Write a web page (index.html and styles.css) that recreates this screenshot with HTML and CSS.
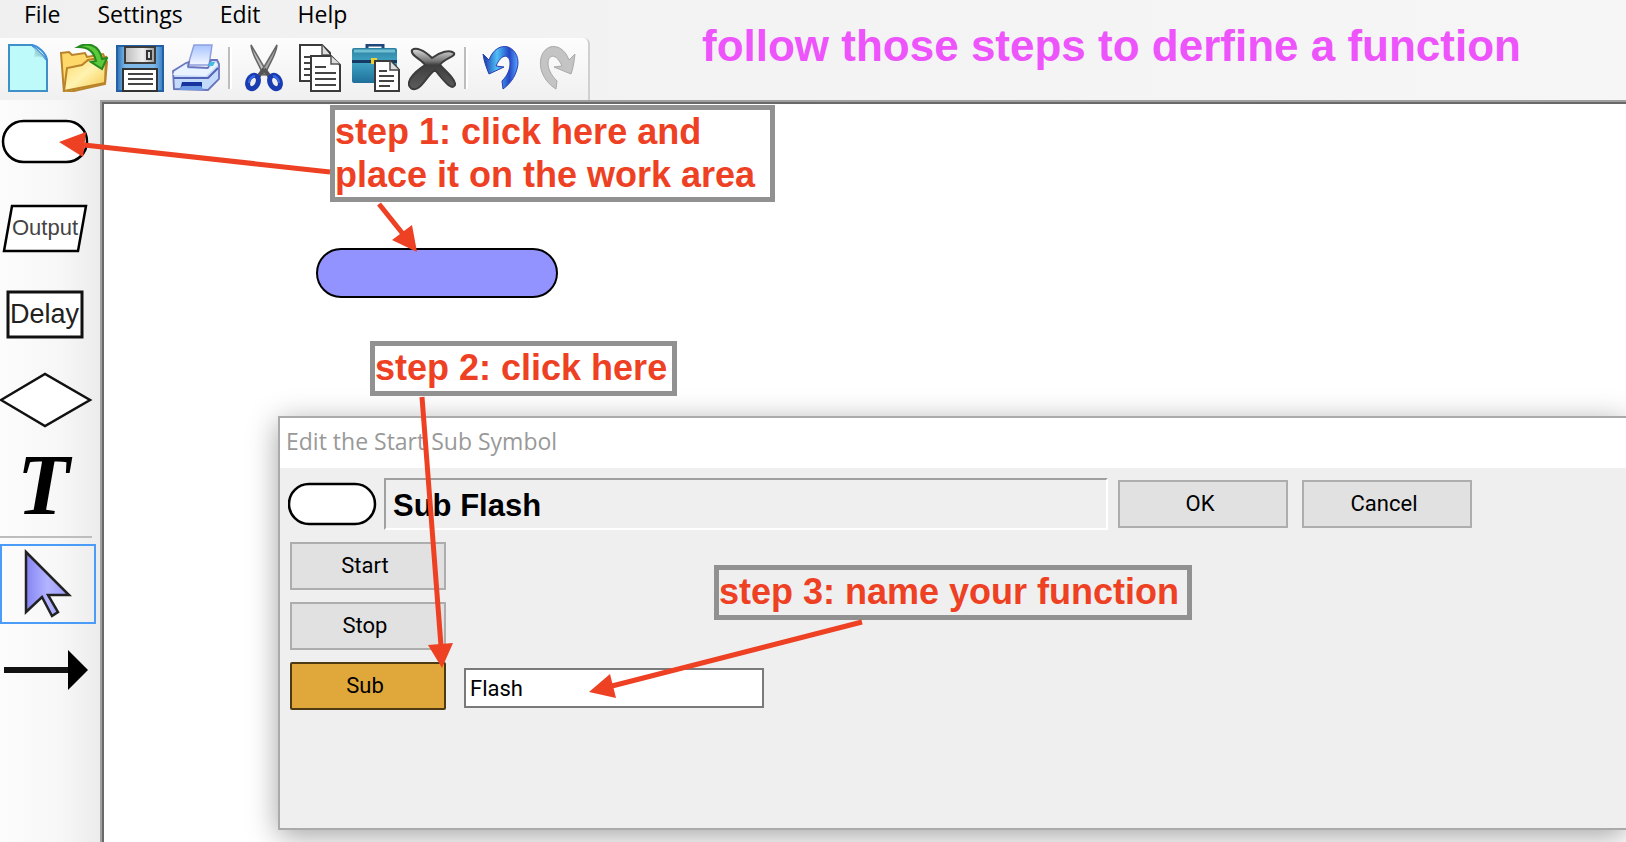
FILE: index.html
```html
<!DOCTYPE html>
<html lang="en">
<head>
<meta charset="utf-8">
<title>Flowchart editor</title>
<link rel="stylesheet" href="styles.css">
</head>
<body>
<div class="app">
  <header class="top">
    <nav class="menu" aria-label="Main menu">
      <button type="button">File</button>
      <button type="button">Settings</button>
      <button type="button">Edit</button>
      <button type="button">Help</button>
    </nav>
    <div class="toolbar" role="toolbar" aria-label="Tools">
      <button type="button" aria-label="New">
        <svg viewBox="0 0 48 48"><defs><linearGradient id="fold" x1="0" y1="1" x2="1" y2="0"><stop offset="0" stop-color="#c3fbfc"/><stop offset=".55" stop-color="#8cc6d0"/><stop offset="1" stop-color="#d5f5fa"/></linearGradient></defs>
          <path d="M5 1h23l15 15v31H5z" fill="#bffafb" stroke="#3f8fc9" stroke-width="2"/><path d="M28 1c4 4 3 8 2 12 5-1 9-1 13 3z" fill="url(#fold)"/><path d="M28 1c6 1 14 8 15 15" fill="none" stroke="#3b8ee0" stroke-width="2"/></svg>
      </button>
      <button type="button" aria-label="Open">
        <svg viewBox="0 0 48 48"><defs><linearGradient id="folder" x1="0" y1="0" x2="1" y2="1"><stop offset="0" stop-color="#ffd764"/><stop offset=".5" stop-color="#fff3b0"/><stop offset="1" stop-color="#f5c545"/></linearGradient></defs>
          <path d="M1 9l8-1 3 3 13-2 2 4 16-3 4 8-2 22-40 9H4z" fill="#ffd86a" stroke="#b9832a" stroke-width="2"/><path d="M4 47l3-23 15-3 6-5 18-3-1 26z" fill="url(#folder)" stroke="#b9832a" stroke-width="2"/><path d="M18 3C27-2 39 0 42 15l5-1-5 11-11-7 5-1C34 7 28 3 18 3z" fill="#5cc83c" stroke="#248a1d" stroke-width="2"/></svg>
      </button>
      <button type="button" aria-label="Save">
        <svg viewBox="0 0 48 48"><defs><linearGradient id="disk"><stop offset="0" stop-color="#2b6fb3"/><stop offset=".18" stop-color="#7db8e8"/><stop offset=".8" stop-color="#7db8e8"/><stop offset="1" stop-color="#3a7fc4"/></linearGradient><linearGradient id="metal"><stop offset="0" stop-color="#bcbcbc"/><stop offset=".6" stop-color="#efefef"/><stop offset="1" stop-color="#9a9a9a"/></linearGradient></defs>
          <path d="M1 2h46v45H1z" fill="url(#disk)" stroke="#235fa5" stroke-width="2"/><path d="M9 3h30v16H9z" fill="url(#metal)" stroke="#3c3c3c" stroke-width="2"/><path d="M31 7h4v8h-4z" fill="#ddd" stroke="#333" stroke-width="2"/><path d="M7 25h34v22H7z" fill="#fff" stroke="#333" stroke-width="2"/><path d="M12 30h25M12 35h25M12 40h25" stroke="#444" stroke-width="2"/></svg>
      </button>
      <button type="button" aria-label="Print">
        <svg viewBox="0 0 48 48"><defs><linearGradient id="paper" x1="0" y1="0" x2="0" y2="1"><stop offset="0" stop-color="#a8c4ff"/><stop offset="1" stop-color="#f4f7ff"/></linearGradient></defs>
          <path d="M22 1h18l-3 20H16z" fill="url(#paper)" stroke="#8f9fdd" stroke-width="1.5"/><path d="M1 27l13-8 3-1-1 5 20 1 3-8 6 0 2 4v15L36 46 2 45z" fill="#c3dafb" stroke="#6a74bb" stroke-width="1.8"/><path d="M2 28l12-8 2 5h20l8-7 2 3-12 11-33-1z" fill="#e9f2ff"/><path d="M2 34h34l10-10" fill="none" stroke="#5564b5" stroke-width="2"/><path d="M10 38h20v8H8z" fill="#17349f"/><path d="M10 42h19l3 4H7z" fill="#6d9be6"/><path d="M38 18l5 0-2 4h-5z" fill="#42bce0"/></svg>
      </button>
      <span class="rule"></span>
      <button type="button" aria-label="Cut">
        <svg viewBox="0 0 48 48"><path d="M11 1l16 27-4 3C19 19 12 12 11 1z" fill="#bdbdbd" stroke="#666" stroke-width="1.5"/><path d="M37 1L21 28l4 3C29 19 36 12 37 1z" fill="#a5a5a5" stroke="#666" stroke-width="1.5"/><path d="M24 25l-6 8M24 25l6 8" stroke="#555" stroke-width="4"/><ellipse cx="13" cy="38" rx="5" ry="7" transform="rotate(25 13 38)" fill="#eee" stroke="#1a3cb0" stroke-width="5"/><ellipse cx="35" cy="38" rx="5" ry="7" transform="rotate(-25 35 38)" fill="#eee" stroke="#1a3cb0" stroke-width="5"/><path d="M9 39c0-4 3-7 6-7M39 39c0-4-3-7-6-7" fill="none" stroke="#3569e5" stroke-width="2"/></svg>
      </button>
      <button type="button" aria-label="Copy">
        <svg viewBox="0 0 48 48"><path d="M4 1h22l8 8v28H4z" fill="#fff" stroke="#3a3a3a" stroke-width="2"/><path d="M8 13h7M8 19h7M8 25h7M8 31h7" stroke="#444" stroke-width="2"/><path d="M26 1v10h8" fill="#ddd" stroke="#555" stroke-width="1.5"/><path d="M15 12h20l9 9v26H15z" fill="#fff" stroke="#3a3a3a" stroke-width="2"/><path d="M35 12v8h9" fill="#ddd" stroke="#555" stroke-width="1.5"/><path d="M19 23h11M19 29h21M19 35h21M19 41h21" stroke="#444" stroke-width="2"/></svg>
      </button>
      <button type="button" aria-label="Paste">
        <svg viewBox="0 0 48 48"><defs><linearGradient id="caseFill" x1="0" y1="0" x2="0" y2="1"><stop offset="0" stop-color="#2b7fa0"/><stop offset=".4" stop-color="#41a4c4"/><stop offset="1" stop-color="#1e6f9a"/></linearGradient></defs>
          <path d="M15 5V1h16v4" fill="none" stroke="#1f477c" stroke-width="3"/><rect y="4" width="45" height="35" rx="2" fill="url(#caseFill)"/><path d="M2 7h41" stroke="#70bfd2" stroke-width="3"/><path d="M0 16h45v3H0z" fill="#153a66"/><path d="M19 14h6v6h-6z" fill="#f0d22c"/><path d="M23 17h16l8 9v21H23z" fill="#fff" stroke="#3a3a3a" stroke-width="2"/><path d="M38 17v9h9" fill="#ddd" stroke="#444" stroke-width="1.5"/><path d="M27 27h8M27 32h15M27 37h15M27 42h11" stroke="#444" stroke-width="2"/></svg>
      </button>
      <button type="button" aria-label="Delete">
        <svg viewBox="0 0 48 48"><defs><linearGradient id="cross" x1="0" y1="0" x2="0" y2="1"><stop offset="0" stop-color="#dcdcdc"/><stop offset=".3" stop-color="#777"/><stop offset=".4" stop-color="#3e3e3e"/><stop offset="1" stop-color="#5c5c5c"/></linearGradient></defs>
          <path d="M4 6c4-3 12 0 20 8 8-6 18-9 22-5 2 4-10 5-14 12 7 7 16 15 15 20-3 5-8 0-20-15C20 31 16 40 10 44c-5 3-10 0-9-6 2-8 11-13 16-17C14 15 2 12 4 6z" fill="url(#cross)" stroke="#3c3c3c" stroke-width="2"/></svg>
      </button>
      <span class="rule"></span>
      <button type="button" aria-label="Undo">
        <svg viewBox="0 0 48 48"><defs><linearGradient id="undo"><stop offset="0" stop-color="#1b2fa6"/><stop offset=".4" stop-color="#4fc0f7"/><stop offset=".75" stop-color="#2345c6"/><stop offset="1" stop-color="#5ba6ff"/></linearGradient></defs>
          <path d="M7 10l6 6C17 5 25 1 32 3c8 3 12 12 9 22-2 8-7 15-14 20l-1-8c6-6 8-12 8-18 0-8-8-11-14 3l8 1-15 7c-2-5-5-12-6-20z" fill="url(#undo)" stroke="#2a3fb4" stroke-width="1"/></svg>
      </button>
      <button type="button" aria-label="Redo">
        <svg viewBox="0 0 48 48"><path d="M43 10l-6 6C33 5 25 1 18 3 10 6 7 15 9 25c2 8 7 15 15 20l1-8c-6-6-9-12-9-18 0-8 8-11 14 3l-8 1 17 7c2-5 3-12 4-20z" fill="#c4c4c4" stroke="#a9a9a9" stroke-width="1"/></svg>
      </button>
    </div>
  </header>

  <div class="main">
    <aside class="palette" aria-label="Symbols">
      <button type="button" aria-label="Start, stop or sub">
        <svg viewBox="0 0 96 80"><rect x="3" y="19" width="84" height="41" rx="20.500" fill="#fff" stroke="#000" stroke-width="2.500"/></svg>
      </button>
      <button type="button">
        <svg viewBox="0 0 96 80"><path d="M12 18h74l-8 45H4z" fill="#fff" stroke="#000" stroke-width="2.500"/><text x="12" y="47" font-size="22" fill="#444">Output</text></svg>
      </button>
      <button type="button">
        <svg viewBox="0 0 96 80"><path d="M8 18h74v45H8z" fill="#fff" stroke="#111" stroke-width="3"/><text x="10" y="49" font-size="27" fill="#222">Delay</text></svg>
      </button>
      <button type="button" aria-label="Decision">
        <svg viewBox="0 0 96 80"><path d="M1 40l44-26 45 26-45 26z" fill="#fff" stroke="#111" stroke-width="2.500"/></svg>
      </button>
      <button type="button">
        <svg viewBox="0 0 96 80"><text class="letter" x="17" y="68">T</text></svg>
      </button>
      <span class="divider"></span>
      <button type="button" class="selected" aria-label="Select">
        <svg viewBox="0 0 96 80"><defs><linearGradient id="pointer"><stop offset="0" stop-color="#8484f5"/><stop offset=".5" stop-color="#b4b4ff"/><stop offset="1" stop-color="#9a9afa"/></linearGradient></defs><path d="M26 8l43 43H48l10 17-6 4-10-19-16 15z" fill="url(#pointer)" stroke="#222" stroke-width="2.500"/></svg>
      </button>
      <button type="button" aria-label="Connector">
        <svg viewBox="0 0 96 80"><path d="M4 37h65v6H4z" fill="#111"/><path d="M68 20l20 20-20 20z"/></svg>
      </button>
    </aside>

    <main class="canvas">
      <div class="node"></div>

      <section class="dialog" role="dialog" aria-labelledby="dialog-title">
        <h2 class="dialog-title" id="dialog-title">Edit the Start Sub Symbol</h2>
        <div class="dialog-body">
          <div class="dialog-head">
            <svg class="symbol" viewBox="0 0 90 48"><rect x="1" y="4" width="86" height="40" rx="20" fill="#fff" stroke="#000" stroke-width="2.500"/></svg>
            <output class="preview">Sub Flash</output>
            <button type="button" class="btn wide">OK</button>
            <button type="button" class="btn wide">Cancel</button>
          </div>
          <div class="kinds">
            <button type="button" class="btn">Start</button>
            <button type="button" class="btn">Stop</button>
            <div class="kind-row">
              <button type="button" class="btn active">Sub</button>
              <input class="name" type="text" value="Flash" aria-label="Sub name">
            </div>
          </div>
        </div>
      </section>
    </main>
  </div>

  <div class="notes">
    <p class="headline">follow those steps to derfine a function</p>
    <p class="note note-1">step 1: click here and<br>place it on the work area</p>
    <p class="note note-2">step 2: click here</p>
    <p class="note note-3">step 3: name your function</p>
    <svg class="arrows" width="900" height="720">
      <path class="shaft" d="M330 172L84 145M379 204L403 234M422 397L441 646M862 622L612 686"/>
      <path class="tip" d="M59 142l27-10-3 25zM417 252l-5-27-20 15zM442 668l-14-23 25-2zM589 692l21-18 6 24z"/>
    </svg>
  </div>
</div>
</body>
</html>
```

FILE: styles.css
```css
* { box-sizing: border-box; }

body {
  margin: 0;
  font-family: "Liberation Sans", Arial, sans-serif;
  color: #000;
}

button {
  padding: 0;
  border: 0;
  background: none;
  font: inherit;
  color: inherit;
}

svg { display: block; }

.app {
  position: relative;
  display: flex;
  flex-direction: column;
  min-height: 100vh;
  overflow: hidden;
  background: linear-gradient(90deg, #f0f0f0, #f6f6f6);
}

.menu {
  display: flex;
  gap: 37px;
  height: 38px;
  padding-left: 24px;
  font: 23px/28px "Open Sans", "Noto Sans", sans-serif;
}

.menu button { height: 28px; }

.toolbar {
  display: flex;
  align-items: center;
  gap: 8px;
  width: fit-content;
  height: 62px;
  padding: 0 8px 2px 4px;
  border-right: 2px solid #d0d0d0;
  border-radius: 0 6px 0 0;
  background: linear-gradient(#fdfdfd, #f0f0f0);
}

.toolbar svg {
  width: 48px;
  height: 48px;
}

.rule {
  width: 4px;
  height: 42px;
  border-left: 2px solid #bdbdbd;
  border-right: 2px solid #fff;
}

.main {
  display: flex;
  flex: 1;
}

.palette {
  display: flex;
  flex-direction: column;
  align-items: flex-start;
  gap: 6px;
  width: 100px;
  padding-top: 2px;
  background: linear-gradient(90deg, #fcfcfc, #f7f7f7 60%, #ececec);
}

.palette svg {
  width: 96px;
  height: 80px;
  overflow: visible;
}

.letter {
  font: italic 700 86px "Liberation Serif", serif;
}

.selected {
  outline: 2px solid #4a9cf8;
  outline-offset: -2px;
}

.divider {
  width: 92px;
  height: 2px;
  margin-top: 4px;
  background: #bdbdbd;
}

.canvas {
  position: relative;
  flex: 1;
  overflow: hidden;
  border: solid #696969;
  border-width: 2px 0 0 2px;
  outline: 2px solid #a0a0a0;
  margin: 2px 0 0 2px;
  background: #fff;
}

.node {
  position: absolute;
  left: 212px;
  top: 144px;
  width: 242px;
  height: 50px;
  border: 2px solid #000;
  border-radius: 25px;
  background: #9393ff;
}

.dialog {
  position: absolute;
  left: 174px;
  right: 0;
  top: 312px;
  height: 414px;
  border: 2px solid #aaa;
  border-right: 0;
  background: #efefef;
  box-shadow: 0 6px 28px rgba(0, 0, 0, .36);
}

.dialog-title {
  height: 50px;
  margin: 0;
  padding-left: 6px;
  background: #fff;
  color: #999;
  font: 23px/46px "Open Sans", "Noto Sans", sans-serif;
}

.dialog-body { padding: 10px 154px 0 8px; }

.dialog-head {
  display: flex;
  align-items: center;
  gap: 14px;
}

.symbol {
  width: 90px;
  height: 48px;
  margin-right: -8px;
}

.preview {
  flex: 1;
  height: 52px;
  margin-right: -4px;
  padding-left: 7px;
  border: 2px solid;
  border-color: #a0a0a0 #fff #fff #a0a0a0;
  font-size: 31px;
  font-weight: 700;
  line-height: 52px;
}

.btn {
  width: 156px;
  height: 48px;
  padding-right: 6px;
  border: 2px solid #adadad;
  background: #e1e1e1;
  font: 22px/44px Roboto, sans-serif;
}

.wide { width: 170px; }

.active {
  border-color: #4d3a12;
  border-radius: 2px;
  background: #e0a83a;
}

.kinds {
  display: flex;
  flex-direction: column;
  gap: 12px;
  padding: 12px 0 0 2px;
}

.kind-row {
  display: flex;
  align-items: center;
  gap: 18px;
}

.name {
  width: 300px;
  height: 40px;
  margin-top: 4px;
  padding: 0 4px;
  border: 2px solid #7a7a7a;
  background: #fff;
  font: 22px Roboto, sans-serif;
}

.notes p {
  position: absolute;
  margin: 0;
  font-weight: 700;
  white-space: nowrap;
}

.notes .headline {
  left: 702px;
  top: 20px;
  font-size: 44px;
  line-height: 52px;
  color: #ed54fb;
}

.note {
  border: 5px solid #919191;
  font-size: 36px;
  line-height: 43px;
  color: #ee4023;
}

.note-1 {
  left: 330px;
  top: 105px;
  width: 445px;
  height: 97px;
}

.note-2 {
  left: 370px;
  top: 341px;
  width: 307px;
  height: 55px;
}

.note-3 {
  left: 714px;
  top: 565px;
  width: 478px;
  height: 55px;
}

.arrows {
  position: absolute;
  left: 0;
  top: 0;
  pointer-events: none;
}

.shaft {
  stroke: #ee4023;
  stroke-width: 5;
}

.tip { fill: #ee4023; }
```
